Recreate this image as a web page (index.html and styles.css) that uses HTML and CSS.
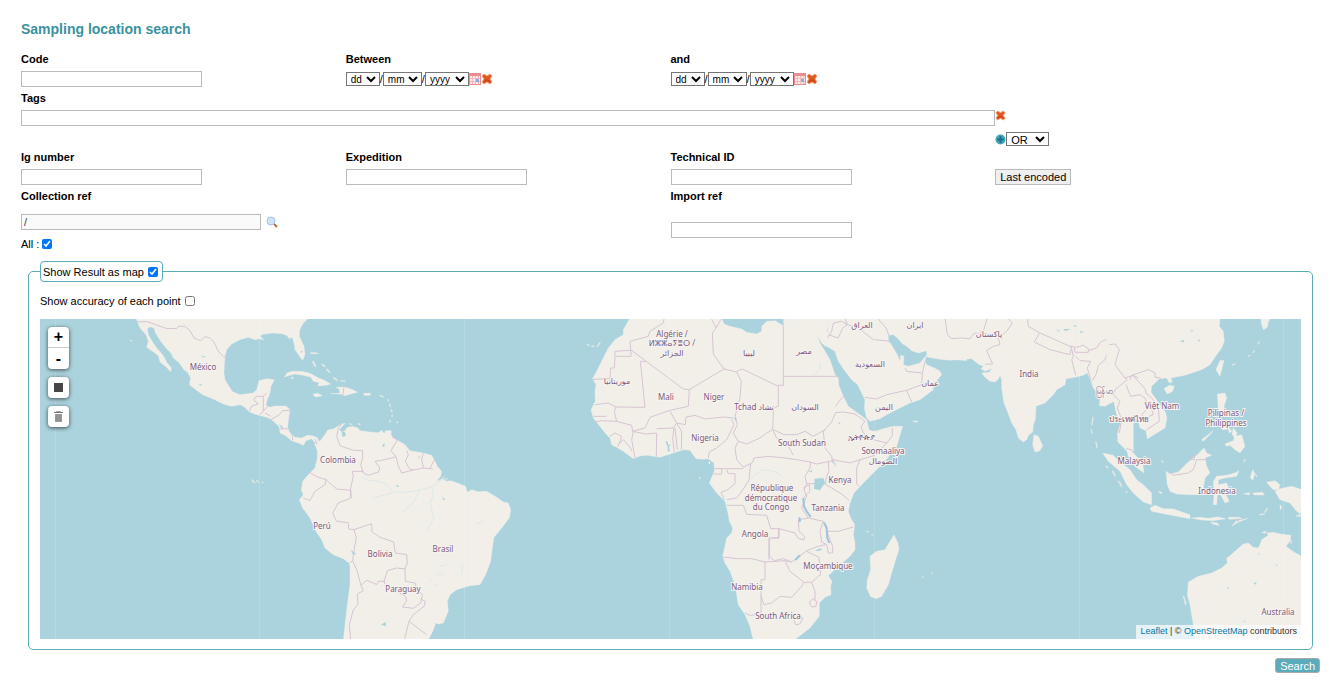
FILE: index.html
```html
<!DOCTYPE html>
<html lang="en">
<head>
    <meta charset="UTF-8">
    <meta name="viewport" content="width=device-width, initial-scale=1.0">
    <title>Sampling location search</title>
    <link rel="stylesheet" href="styles.css">
</head>
<body>
    <!-- shared icons -->
    <svg class="sprite" aria-hidden="true">
        <symbol id="icon-remove" viewBox="0 0 12 12">
            <path d="M1 3 3 1 6 3 9 1 11 3 9 6 11 9 9 11 6 9 3 11 1 9 3 6z" fill="#e2581f" stroke="#f3a375" stroke-width="1"/>
            <path d="M3 8.500 6 7 9 8.500" fill="none" stroke="#d0431c" stroke-width="1.500"/>
        </symbol>
        <symbol id="icon-calendar" viewBox="0 0 12 12">
            <rect width="12" height="12" fill="#ec8c8c"/>
            <rect x="1" y="3" width="10" height="8" fill="#fde9e9"/>
            <path d="M1 5.500h10M1 8.500h10M3.500 3v8M6.500 3v8M9.500 3v8" stroke="#f6baba" stroke-width="1"/>
            <rect x="7" y="6" width="3" height="3" fill="#8fa9e6"/>
        </symbol>
    </svg>

    <h1>Sampling location search</h1>

    <form class="search-form" onsubmit="return false">
        <div class="grid">
            <div class="field">
                <label for="code">Code</label>
                <input type="text" id="code">
            </div>
            <div class="field">
                <label for="from-day">Between</label>
                <div class="date">
                    <select id="from-day" class="day"><option>dd</option></select>/<select class="month" aria-label="From month"><option>mm</option></select>/<select class="year" aria-label="From year"><option>yyyy</option></select>
                    <button type="button" class="icon" aria-label="Pick date"><svg><use href="#icon-calendar"/></svg></button>
                    <button type="button" class="icon" aria-label="Clear date"><svg><use href="#icon-remove"/></svg></button>
                </div>
            </div>
            <div class="field wide">
                <label for="to-day">and</label>
                <div class="date">
                    <select id="to-day" class="day"><option>dd</option></select>/<select class="month" aria-label="To month"><option>mm</option></select>/<select class="year" aria-label="To year"><option>yyyy</option></select>
                    <button type="button" class="icon" aria-label="Pick date"><svg><use href="#icon-calendar"/></svg></button>
                    <button type="button" class="icon" aria-label="Clear date"><svg><use href="#icon-remove"/></svg></button>
                </div>
            </div>

            <div class="field tags">
                <label for="tags">Tags</label>
                <input type="text" id="tags">
            </div>
            <div class="tag-tools">
                <button type="button" class="icon small" aria-label="Clear tags"><svg><use href="#icon-remove"/></svg></button>
                <div class="operator">
                    <button type="button" class="icon small" aria-label="Add tag">
                        <svg viewBox="0 0 11 11"><circle cx="5.500" cy="5.500" r="5" fill="#43a5b8"/><path d="M5.500 2v7M2 5.500h7" stroke="#1d7488" stroke-width="2"/></svg>
                    </button>
                    <select aria-label="Tag operator"><option>OR</option><option>AND</option></select>
                </div>
            </div>

            <div class="field">
                <label for="ig">Ig number</label>
                <input type="text" id="ig">
            </div>
            <div class="field">
                <label for="expedition">Expedition</label>
                <input type="text" id="expedition">
            </div>
            <div class="field">
                <label for="technical">Technical ID</label>
                <input type="text" id="technical">
            </div>
            <div class="field end">
                <button type="button" class="last">Last encoded</button>
            </div>

            <div class="field collection">
                <label for="collection">Collection ref</label>
                <div class="lookup">
                    <input type="text" id="collection" value="/" readonly>
                    <button type="button" class="icon" aria-label="Find collection">
                        <svg viewBox="0 0 12 12"><path d="M8 8l3 3" stroke="#b5713c" stroke-width="2"/><circle cx="5" cy="5" r="4" fill="#cfe4fa" stroke="#a3bfe3"/></svg>
                    </button>
                </div>
                <div class="all"><label for="all">All :</label><input type="checkbox" id="all" checked></div>
            </div>
            <div class="field import">
                <label for="import">Import ref</label>
                <input type="text" id="import">
            </div>
        </div>

        <fieldset>
            <legend><label for="show-map">Show Result as map</label><input type="checkbox" id="show-map" checked></legend>
            <div class="accuracy"><label for="accuracy">Show accuracy of each point</label><input type="checkbox" id="accuracy"></div>

            <div class="map">
                <svg class="world" viewBox="0 0 1261 320" preserveAspectRatio="xMidYMid slice" role="img" aria-label="World map">
                    <g transform="scale(.33333) translate(0 -3)">
                        <!-- North and Central America -->
                        <g>
                            <path class="land" d="M288 0 300 30 318 50 325 70 320 88 345 105 356 115 360 132 378 146 392 161 394 150 380 133 374 120 366 108 350 90 338 72 325 50 322 32 330 26 342 30 347 46 362 70 378 90 395 108 398 118 418 135 432 155 444 165 452 180 448 200 470 217 488 230 520 243 550 258 575 265 600 260 615 268 628 282 650 290 680 298 695 305 717 325 720 345 735 352 755 368 775 375 790 382 798 368 815 362 826 375 832 385 838 372 832 359 818 353 802 352 785 360 765 358 750 345 743 330 746 300 750 275 738 264 705 264 690 268 678 262 682 245 690 225 693 205 703 185 680 182 657 188 650 215 640 225 600 230 578 221 567 205 555 185 552 165 553 140 556 110 560 95 575 78 600 65 625 58 645 65 658 62 671 65 660 54 668 49 700 45 725 47 740 52 748 62 757 58 763 80 765 95 779 115 788 127 795 110 792 85 778 55 779 35 790 15 806 0Z"/>
                            <path class="land" d="M733 177 742 164 757 160 785 160 810 166 835 180 852 186 872 198 860 202 833 204 838 194 820 190 812 177 785 171 765 168 750 172ZM753 177l8 2-4 5ZM819 230l15-3 13 6-22 3Z"/>
                            <path class="water" d="M717 318 730 328 725 333ZM475 200l10-2 0 5ZM484 115h12v3h-10ZM782 98l6 2-4 6Z"/>
                            <path class="islands" d="M813 105l5 2m5 0 10-1m-15 26 8 14m20-7 8 5m8 10 6 8m12 18 10 4M272 67l3 2M636 486l8 8m6-6 5 4m12 2 2-1"/>
                            <path class="border" d="M290 12 322 11 378 31 410 32 415 25 435 25 450 38 462 60 482 68 495 56 508 59 522 72 535 100 550 116 560 117M628 280 635 264 655 258 641 246 648 235 670 235 670 280 658 290M670 235 680 225M670 280 683 265M675 285 692 295M693 305 718 290 728 278 750 277M718 333 744 332M756 350 758 367M826 374 832 382"/>
                        </g>
                        <!-- South America and the Caribbean -->
                        <g transform="translate(750 0)">
                            <path class="land" d="M74 378 90 370 108 345 113 336 130 333 155 318 166 316 158 323 148 335 156 343 167 337 170 329 187 325 205 331 209 338 240 342 265 344 275 337 280 344 300 345 307 356 320 365 345 380 360 398 400 405 425 412 435 430 442 445 455 460 452 475 440 488 458 484 470 490 482 488 510 498 527 505 532 523 545 515 565 521 590 520 620 538 640 552 655 555 662 575 658 600 635 630 612 658 607 690 602 730 587 770 570 800 540 803 500 815 480 830 472 850 475 880 460 915 440 920 435 940 425 950 415 966 160 966 165 920 172 860 180 800 180 745 177 735 160 722 130 710 105 690 95 665 78 640 60 600 38 570 28 545 40 530 34 515 38 490 60 465 75 450 82 420 82 398Z"/>
                            <path class="land" d="M122 227 150 226 148 214 138 208 163 207 185 214 203 223 182 228 165 233 150 228ZM221 226h20v6h-19ZM70 229l12-3 14 7-18 3ZM286 338h18v9l-18-2Z"/>
                            <path class="water" d="M155 340 165 343 168 352 158 358ZM275 384 284 374 283 386ZM182 695 198 707 190 712ZM273 920 287 912 288 925ZM456 535 465 545 460 547ZM315 500 328 504 324 508ZM384 415l6 1-2 6ZM438 915l10 5-15 35-18 12 15-30Z"/>
                            <path class="river" d="M215 477 235 487 270 490 293 502 310 522 345 523 385 517 430 505 455 485 475 482M340 580 370 555 390 515M305 525 250 540M425 505 430 530 420 555 432 600 410 640M560 617 580 610M415 795 430 780M450 745 470 740M440 770 460 768M430 800 445 803M518 740 515 770M445 490l20-15"/>
                            <path class="islands" d="M62 106 75 104M70 130l6 12M98 140l5 6m8 10 8 6m14 18 8 8m12 0 12 2M270 232l10 5m14 7 1 5m4 10 2 6m3 11 2 5m1 10-1 5m-5 12-2 4m22 0 2 2M180 318l5 1m20-2 5 3"/>
                            <path class="border" d="M155 318 145 330 140 355 150 383 190 397 218 398 218 420 212 440 220 465 235 472 265 462 270 450 255 430 275 427 305 420 318 416 325 445 335 465 365 457 400 450 428 453M306 356 322 366 303 398 318 416M350 398 355 410 346 430 358 452 370 457M400 405 395 425 400 450M434 425 420 450M220 460 186 460 190 475 181 515 183 540M60 464 82 477 108 485 125 500 140 513 183 517 183 540 145 555 128 585 140 610 175 614 176 633 192 635 245 617 246 642 270 658 311 672 316 705 350 710 352 735 345 750 346 790 375 795 382 815 397 830 392 855 370 871 337 867 350 850 347 835 285 800 282 790 292 758 320 750 346 753M108 485 105 500 75 520 60 548 40 540M192 635 199 660 193 690 188 728 178 735M188 728 200 755 213 802 230 787 248 794 260 800 265 790 285 790M213 802 220 818 202 828 204 860 190 875 178 920 182 966M392 843 406 850 402 865 370 890 357 910 343 966M357 910 410 950M75 362 82 380M162 208 158 232"/>
                        </g>
                        <!-- Africa -->
                        <g transform="translate(1620 0)">
                            <path class="land" d="M150 0 130 35 130 50 105 65 85 90 65 130 50 160 38 182 48 200 45 220 46 250 33 275 40 300 60 325 75 345 90 360 95 380 130 400 160 422 180 414 200 412 240 418 280 405 310 395 330 397 348 422 370 424 385 422 402 435 403 460 388 495 410 525 435 550 445 590 448 610 458 630 455 645 440 660 428 715 435 735 450 760 465 800 475 860 495 890 510 925 520 966 643 966 690 930 718 895 718 855 735 838 753 830 752 805 756 790 745 773 780 740 810 715 825 695 825 675 820 650 824 620 812 600 805 580 810 555 822 525 850 495 875 470 915 430 950 385 968 325 940 325 910 332 885 340 868 337 860 305 840 290 805 265 790 235 776 200 775 180 765 170 750 125 735 100 720 75 712 53 725 75 738 86 748 65 740 40 750 0 610 0 612 25 605 20 585 8 560 10 545 25 545 40 530 48 500 43 485 33 450 25 432 18 425 0Z"/>
                            <path class="land" d="M942 651 954 675 957 695 950 715 935 765 925 800 905 835 890 842 872 836 860 810 862 785 872 755 870 715 890 700 915 695 930 670ZM998 310l14-2v5ZM385 433l6-2-2 8Z"/>
                            <path class="border" d="M252 3 250 15 210 40 205 55 150 70 152 95 310 213 328 215 432 153 400 108 397 45 408 30 395 3M425 0 408 30M105 115 105 100 152 97M108 115h45V97M105 115 103 150 92 150 90 182 38 184M181 130 195 268 108 267M181 130 200 130 M328 215 325 265 270 277 210 298 195 330 158 340 155 322 110 310 103 280 108 267 85 255 45 260M40 295h40M42 312 65 308 110 310M160 340 155 365 165 420M158 340 197 348 230 345 229 415M230 332 280 330 290 315 270 280M282 330 278 360 283 402M285 330 292 395M304 395 305 340 290 315 316 320 318 297 345 292 375 303 430 297 460 300M90 355 105 345 125 355 120 370 112 388M115 380 130 365 152 390 155 400M432 153 470 162 484 190 480 240 465 295 472 320 460 345 475 370 500 378 540 360 560 345 578 335 580 290 580 270 595 265V205L487 153 470 160M455 305 462 320 440 365 410 390 388 402 385 420M475 370 465 390 470 425 490 448 518 433 522 420 565 415 615 420 650 425 690 432 710 438 758 428M578 335 590 360 620 375 640 412M400 452h90M400 468h25V452M440 455l5 12h20l0 30-22 18-20 8 10 22M440 545l30-5 22-30 15-25 5-50M440 562h50l10 27 60 3 12 40h25v28h-30v65M430 717 470 722 515 722 555 732 615 728 635 732M555 732V785H543V885L512 893 495 885M543 835 552 860 575 855 600 835 635 838 665 805 672 793 695 793M575 660 595 660 597 632 645 645 655 662 672 665 674 655 657 640 655 605 685 600M568 660V715L583 728 610 722 635 732 655 718 680 698 715 685 737 680M615 728 630 760 672 793M695 793 715 775 722 770 717 718 680 700M695 793 705 820 705 850M690 850l10-8 10 8-2 15-12 2-6-8ZM642 907l15-15 12 8-10 18-12 3ZM610 25V202H593M610 175H770M767 265l10-15 15-15M767 284 755 312 730 340 735 390 755 415 758 435M735 335 700 355 675 340 650 350 612 350 580 335M767 284 790 282 825 288 855 310 843 325 850 345 880 365 920 375 937 353 937 330M920 375 885 412 840 425 810 435 758 425M840 425 830 450 830 498 838 505M745 430 747 460 740 475 735 498 785 528 808 547M735 497H680L675 475 690 450 692 432M680 497 672 515 680 535 665 570 685 600 730 610 720 640 725 672 740 680 745 705 758 705 758 685 740 640 775 640 820 627M670 510 688 500 690 520 670 540"/>
                            <path class="river" d="M495 510 515 480 545 455 585 460 605 475M717 155 700 172M720 155v-20"/>
                            <path class="lake" d="M704 482 730 480 735 495 728 505 720 517 702 513ZM758 420 767 440 768 448 760 432ZM465 297l5 5-2 8-6-8ZM256 372l6-3 3 12 8-4-6 12 4 10-8 2 0-16ZM685 460l12-3-2 6ZM775 312l7 3-4 5ZM706 697l16-6 4 5-14 4Z"/>
                            <path class="deep" d="M670 540 672 565 680 580 692 597M732 613 740 630 742 660 748 675M660 612 658 598M646 726 660 712"/>
                            <path class="islands" d="M22 80l6 2m8 4 6-2m10 2 8-12M358 478l2 3M862 640l2 2m12 8 2 1M1027 777l2 1m26-13 2 1"/>
                        </g>
                        <!-- Middle East -->
                        <g transform="translate(2160 0)">
                            <path class="land" d="M211 0 205 20 203 40 198 60 200 85 225 100 235 130 252 155 275 185 293 200 305 225 315 245 313 270 320 300 330 310 360 302 380 290 420 270 450 255 480 245 500 230 520 215 520 200 545 170 540 160 528 152 500 140 495 130 498 113 480 135 445 145 430 140 432 115 422 112 420 130 412 110 385 65 385 52 400 50 412 60 428 78 440 85 455 98 475 105 500 98 510 112 540 120 570 123 620 128 620 0Z"/>
                            <path class="border" d="M255 0 262 20 295 30 340 65 378 68 390 72M205 50 235 60 248 30 262 20 245 10 220 15 215 40 203 60M352 0 378 30 388 55M560 0 560 35 570 62 600 65M570 62 580 80 590 100 570 125M315 238 350 243 380 230 440 217 455 252M440 217 485 200 487 165 495 130M435 150 440 160 485 165"/>
                        </g>
                        <!-- South Asia -->
                        <g transform="translate(2670 0)">
                            <path class="land" d="M-10 0V117L30 124 60 127 125 122 145 138 160 145 153 152 165 160 185 152 178 163 155 165 165 178 180 190 195 192 205 183 210 172 215 185 215 210 222 255 232 280 245 315 258 335 265 360 280 372 290 365 295 352 308 342 310 320 316 305 318 265 345 255 370 230 380 215 405 200 408 182 435 178 460 172 472 165 483 190 490 210 502 225 510 245 508 263 525 265 552 250 560 290 572 315 562 370 610 420V0ZM312 350 325 355 338 383 330 398 315 402 308 380Z"/>
                            <path class="border" d="M45 0 52 50 65 62 95 60 120 62 130 48 160 40 172 0M232 0 247 15 230 40 205 60 210 80 190 85 170 98 188 138 165 139M292 0 295 25 330 45 420 85 425 85 420 110 360 95 313 72 328 46M420 85 440 88 460 82 475 92 475 103H435L433 90M475 98 500 90 512 72 535 62 540 78 550 80 545 98 530 110 525 125 505 143 498 170 485 190M425 92 430 115 425 125 437 172M437 115 450 128 482 130 472 150 482 185M555 80 567 95 565 115 555 145 590 180 602 178M600 180 580 205 555 210 560 230 570 252 565 275 575 310 562 345 565 370"/>
                            <path class="islands" d="M489 298 486 320M484 335l2 10M498 372l3 16M528 445l6 5M550 462 555 475M570 498l5 8M588 520l3 4"/>
                            <path class="water" d="M378 35l12 3-4 3ZM400 33l22 0-16 7ZM430 20l10 4-6 3ZM450 38l12 4-10 3Z"/>
                        </g>
                        <!-- East Asia and Oceania -->
                        <g transform="translate(3210 0)">
                            <path class="land" d="M-10 0V245L12 250 20 285 32 315 22 350 25 370 50 395 55 415 75 445 102 465 98 435 75 410 50 388 42 370 35 352 38 322 48 310 62 300 68 290 85 308 90 330 108 338 112 363 135 348 165 330 171 300 165 280 145 253 123 222 125 205 148 182 170 180 178 195 187 192 183 180 225 172 275 155 300 140 320 110 335 90 343 70 340 40 328 25 330 0ZM162 212 178 202 193 205 188 220 172 228ZM318 155 330 128 342 127 330 175ZM452 0 455 20 460 35 472 28 475 12 482 0Z"/>
                            <path class="land" d="M-22 405 10 412 22 425 60 455 80 485 100 500 125 525 125 560 100 552 70 525 50 500 30 460 -5 430ZM120 570 135 562 160 572 190 573 240 590 240 602 200 595 150 585 125 580ZM168 460 180 468 205 462 235 432 262 410 282 390 290 405 305 412 285 420 290 445 300 465 285 480 280 510 265 530 235 530 200 528 180 520 172 500ZM310 490 320 475 350 472 375 465 387 458 380 475 345 480 325 485 325 500 350 495 355 510 340 515 350 535 358 550 345 555 332 530 322 530 320 560 310 560 312 530ZM322 228 345 225 350 240 342 265 350 290 340 295 325 275ZM345 378 370 368 375 355 395 350 405 385 390 405 375 395 360 382 350 385ZM330 320 345 325 350 335 338 335ZM355 325l10 15-8 5ZM370 330l12 15-8 15-8-12ZM470 493 495 488 510 500 505 515 490 515 480 505ZM510 512 545 505 576 515V590L560 580 540 555 510 545 495 520ZM365 625 378 610 415 600 380 615ZM302 612l20 3 6 8-20-5ZM245 600l25-2 25 3 28-4 25 5-40 6-35-2ZM355 598l35 0 5 4-38 2ZM275 365 310 338 298 352 280 370ZM428 455l6 10-5 22-8-8ZM400 527l20-3-3 7ZM428 525l30-2 5 8-30 0ZM510 560l6 8-5 8ZM557 595h18v-8ZM455 643l15-3-5 6ZM145 520l10 2-2 6Z"/>
                            <path class="land" d="M576 716 548 700 528 685 540 670 543 652 512 648 488 643 470 645 475 652 455 665 450 680 445 690 430 688 415 675 400 678 375 700 358 715 350 720 352 735 335 750 305 765 265 775 235 792 232 830 240 860 245 890 250 920 255 966H576Z"/>
                            <path class="border" d="M-2 80 15 78 28 95 22 115 15 140 45 180 70 172 85 180M60 185 65 172 115 155 135 165 135 178 152 180M45 180 52 185 15 215 10 230 30 250 22 270 35 305 28 345M48 200 62 235 90 230 105 240 112 258 110 270M70 175 85 190 105 212 108 225 130 245 145 270 148 310 110 335M110 275 95 290 105 300 130 290 125 275M48 392 65 395 70 405M178 460 190 472 235 465 250 455 260 425 285 425M240 425 252 410 253 425ZM385 600v12"/>
                            <path class="islands" d="M448 72l-4 6M433 98l-3 5M420 112l-4 3M375 138l-8 3M405 425l-3 5M8 460l6 10M25 490l8 8M155 428l4 4M450 590 463 588M465 582 472 572M540 660l4 15M548 700l4 4M220 835l8 20M223 850l4 10M435 468l5 6"/>
                            <path class="water" d="M208 70l15-5-2 8ZM262 65l8 0-2 6ZM240 38l10-2-4 5ZM350 810l8-2-2 5ZM430 795l10-2-3 7ZM497 740l6 0-3 5ZM445 705l5 2-4 4ZM400 908l8 3-6 2Z"/>
                        </g>
                    </g>
                    <path class="seam" d="M15.500 0V320M219.500 0V320M424.500 0V320M629.500 0V320M834.500 0V320M1039.500 0V320M1243.500 0V320"/>
                    <g class="labels">
                        <text x="163" y="51">México</text>
                        <text x="298" y="144">Colombia</text>
                        <text x="282" y="210">Perú</text>
                        <text x="340" y="238">Bolivia</text>
                        <text x="403" y="233">Brasil</text>
                        <text x="363" y="273">Paraguay</text>
                        <text x="632" y="18">Algérie /</text>
                        <text x="632" y="27">ⵍⵣⵣⴰⵢⴻⵔ /</text>
                        <text x="632" y="37">الجزائر</text>
                        <text x="709" y="37">ليبيا</text>
                        <text x="764" y="35">مصر</text>
                        <text x="822" y="9">العراق</text>
                        <text x="875" y="9">ایران</text>
                        <text x="830" y="48">السعودية</text>
                        <text x="890" y="67">عمان</text>
                        <text x="577" y="65">موريتانيا</text>
                        <text x="626" y="81">Mali</text>
                        <text x="674" y="81">Niger</text>
                        <text x="714" y="91">Tchad تشاد</text>
                        <text x="765" y="91">السودان</text>
                        <text x="844" y="91">اليمن</text>
                        <text x="665" y="122">Nigeria</text>
                        <text x="762" y="127">South Sudan</text>
                        <text x="821" y="121">ኢትዮጵያ</text>
                        <text x="843" y="135">Soomaaliya</text>
                        <text x="843" y="145">الصومال</text>
                        <text x="800" y="164">Kenya</text>
                        <text x="732" y="172">République</text>
                        <text x="731" y="182">démocratique</text>
                        <text x="731" y="191">du Congo</text>
                        <text x="788" y="192">Tanzania</text>
                        <text x="715" y="218">Angola</text>
                        <text x="788" y="250">Moçambique</text>
                        <text x="707" y="271">Namibia</text>
                        <text x="738" y="300">South Africa</text>
                        <text x="949" y="18">پاکستان</text>
                        <text x="989" y="58">India</text>
                        <text x="1064" y="75">မြန်မာ</text>
                        <text x="1122" y="90">Việt Nam</text>
                        <text x="1089" y="103">ประเทศไทย</text>
                        <text x="1186" y="97">Pilipinas /</text>
                        <text x="1186" y="107">Philippines</text>
                        <text x="1094" y="145">Malaysia</text>
                        <text x="1177" y="175">Indonesia</text>
                        <text x="1238" y="296">Australia</text>
                    </g>
                </svg>

                <div class="map-tools">
                    <div class="bar">
                        <button type="button" aria-label="Zoom in">+</button>
                        <button type="button" aria-label="Zoom out">-</button>
                    </div>
                    <div class="bar">
                        <button type="button" aria-label="Draw a rectangle"><svg viewBox="0 0 11 11"><rect x="1" y="1" width="9" height="9" fill="#464646"/></svg></button>
                    </div>
                    <div class="bar">
                        <button type="button" aria-label="Delete layers"><svg viewBox="0 0 11 11"><path d="M4 1V0h3v1" fill="none" stroke="#777"/><path d="M1 1h9v1H1z" fill="#777"/><path d="M2 3h7v8H2z" fill="#999"/><path d="M4 4v6M7 4v6" stroke="#858585"/></svg></button>
                    </div>
                </div>
                <div class="attribution"><a href="#">Leaflet</a> | © <a href="#">OpenStreetMap</a> contributors</div>
            </div>
        </fieldset>

        <div class="actions"><button type="submit">Search</button></div>
    </form>
</body>
</html>
```
FILE: styles.css
```css
* {
    box-sizing: border-box;
}
body {
    margin: 0;
    padding: 20px 9px 20px 21px;
    font-family: "Liberation Sans", Arial, sans-serif;
    font-size: 11px;
    color: #000;
    background-color: white;
}
.sprite {
    display: none;
}
h1 {
    margin: 0 0 10px;
    font-size: 14px;
    line-height: 18px;
    color: #3a92a0;
}
input, select, button {
    margin: 0;
    font-family: inherit;
    font-size: 11px;
    color: #000;
}
.grid {
    display: grid;
    grid-template-columns: repeat(4, 1fr);
}
.field > label {
    display: block;
    line-height: 23px;
    font-weight: bold;
}
input[type="text"] {
    display: block;
    width: 181px;
    height: 16px;
    padding: 0 2px;
    border: 1px solid #bbb;
}
input[type="checkbox"] {
    width: 10px;
    height: 10px;
}
select {
    height: 14px;
    padding: 0;
    border: 1px solid #767676;
    border-radius: 0;
    background-color: white;
}
.wide {
    grid-column: span 2;
}
.date {
    display: flex;
    align-items: center;
    height: 16px;
}
.date select {
    font-size: 10px;
}
.day {
    min-width: 32px;
}
.month {
    min-width: 38px;
}
.year {
    min-width: 44px;
}
.icon {
    display: block;
    width: 12px;
    height: 12px;
    padding: 0;
    border: none;
    background: none;
    cursor: pointer;
}
.icon svg {
    display: block;
    width: 100%;
    height: 100%;
}
.small {
    width: 11px;
    height: 11px;
}
.tags {
    grid-column: span 3;
}
.tags input[type="text"] {
    width: 100%;
}
.tag-tools {
    padding-top: 23px;
}
.operator {
    display: flex;
    align-items: center;
    margin-top: 11px;
}
.operator select {
    width: 43px;
}
.end {
    padding-top: 23px;
}
.last {
    display: block;
    height: 16px;
    padding: 0 4px;
    border: 1px solid #bbb;
    background-color: #efefef;
}
.collection {
    grid-column: span 2;
}
.lookup {
    display: flex;
    align-items: center;
    gap: 5px;
    margin-top: 6px;
}
.lookup input[type="text"] {
    width: 240px;
    background-color: #fafafa;
    color: #444;
}
.all {
    display: flex;
    align-items: center;
    gap: 3px;
    height: 28px;
}
.import input {
    margin-top: 14px;
}
fieldset {
    margin: 3px 7px 0;
    padding: 0 11px 10px;
    min-width: 0;
    border: 1px solid #5cabbb;
    border-radius: 5px;
}
legend {
    display: flex;
    align-items: center;
    gap: 4px;
    height: 21px;
    padding: 0 4px 0 2px;
    border: 1px solid #5cabbb;
    border-radius: 4px;
}
.accuracy {
    display: flex;
    align-items: center;
    gap: 4px;
    height: 37px;
}
.map {
    position: relative;
    height: 320px;
    overflow: hidden;
    background-color: #abd3de;
}
.world {
    display: block;
    width: 100%;
    height: 100%;
}
.land {
    fill: #f2efe9;
    stroke: #f2efe9;
    stroke-width: 1;
    stroke-linejoin: round;
}
.water, .lake {
    fill: #abd3de;
}
.border {
    fill: none;
    stroke: #d6c4d3;
    stroke-width: 3;
    stroke-linejoin: round;
}
.river {
    fill: none;
    stroke: #dce8e7;
    stroke-width: 3;
}
.deep {
    fill: none;
    stroke: #9bc5dc;
    stroke-width: 6;
    stroke-linejoin: round;
}
.islands {
    fill: none;
    stroke: #e2e8e4;
    stroke-width: 4;
    stroke-linecap: round;
}
.seam {
    stroke: #fff;
    stroke-opacity: 0.15;
}
.labels {
    font-family: "Noto Sans", "DejaVu Sans", sans-serif;
    font-size: 8px;
    text-anchor: middle;
    fill: #7d5a80;
    stroke: #f6f3ef;
    stroke-width: 2;
    paint-order: stroke;
}
.map-tools {
    position: absolute;
    top: 8px;
    left: 8px;
    display: flex;
    flex-direction: column;
    gap: 8px;
}
.bar {
    border-radius: 4px;
    background-color: white;
    box-shadow: 0 1px 4px rgba(0, 0, 0, 0.65);
}
.bar button {
    display: flex;
    align-items: center;
    justify-content: center;
    width: 21px;
    height: 21px;
    padding: 0;
    border: none;
    background: none;
    font-size: 16px;
    font-weight: bold;
    cursor: pointer;
}
.bar button:first-child:not(:last-child) {
    height: 20px;
}
.bar button + button {
    height: 22px;
    border-top: 1px solid #ccc;
}
.bar svg {
    width: 11px;
    height: 11px;
}
.attribution {
    position: absolute;
    right: 0;
    bottom: 0;
    padding: 0 4px 2px;
    font-size: 9px;
    line-height: 12px;
    color: #333;
    background-color: rgba(255, 255, 255, 0.7);
}
.attribution a {
    color: #0078a8;
    text-decoration: none;
}
.actions {
    display: flex;
    justify-content: flex-end;
    margin-top: 8px;
}
.actions button {
    height: 15px;
    padding: 0 4px;
    border: 1px solid #aaa;
    border-radius: 3px;
    background-color: #5cabbb;
    color: white;
    cursor: pointer;
}
```
